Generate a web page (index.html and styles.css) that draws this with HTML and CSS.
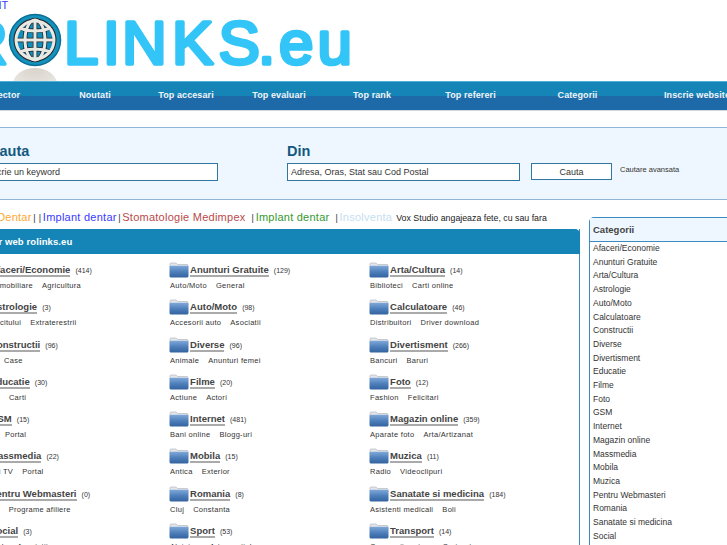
FILE: index.html
```html
<!DOCTYPE html>
<html lang="en">
<head>
    <meta charset="UTF-8">
    <title>ROLINKS.eu</title>
    <link rel="stylesheet" href="styles.css">
</head>
<body>
    <svg class="defs" width="0" height="0">
        <defs>
            <linearGradient id="folderBody" x1="0" y1="0" x2="0" y2="1">
                <stop offset="0" stop-color="#7fa8d8"/>
                <stop offset="0.5" stop-color="#4f80bb"/>
                <stop offset="1" stop-color="#33639f"/>
            </linearGradient>
            <symbol id="folder" viewBox="0 0 20 16">
                <path d="M1 3.5V2q0-1 1-1h5l1.500 1.500H18q1 0 1 1V6H1z" fill="#e4e6ea" stroke="#a9b0bb" stroke-width=".6"/>
                <path d="M.5 5q0-1.200 1.200-1.200H18.300q1.200 0 1.200 1.200V14q0 1.500-1.500 1.500H2q-1.500 0-1.500-1.500z" fill="url(#folderBody)"/>
            </symbol>
        </defs>
    </svg>

    <div class="page">
        <header class="top">
            <a class="top-link" href="#">CONT</a>
            <svg class="logo" width="800" height="71" viewBox="-72 10 800 71">
                <defs>
                    <radialGradient id="reflect" cx="0.5" cy="0" r="0.9">
                        <stop offset="0" stop-color="#d8d3ca"/>
                        <stop offset="1" stop-color="#efeeea"/>
                    </radialGradient>
                </defs>
                <g class="logo-text">
                    <text x="-37" y="63.5">R</text>
                    <text x="64 102.700 122 172 218.600" y="63.5">LINKS</text>
                    <text x="258 279 317.500" y="63.5">.eu</text>
                </g>
                <ellipse cx="35" cy="84" rx="22" ry="16" fill="url(#reflect)"/>
                <circle cx="35" cy="40" r="25.500" fill="#1492bd"/>
                <circle cx="35" cy="40" r="25.500" fill="none" stroke="#0a6f95" stroke-width="1.500"/>
                <circle cx="35" cy="40" r="20.500" fill="#0f8fbd" stroke="#222" stroke-width="2"/>
                <g class="globe-dark">
                    <path d="M35 20V60M15 40H55M19 28Q35 34 51 28M19 52Q35 46 51 52"/>
                    <ellipse cx="35" cy="40" rx="10" ry="20"/>
                </g>
                <g class="globe-light">
                    <path d="M35 20V60M15 40H55M19 28Q35 34 51 28M19 52Q35 46 51 52"/>
                    <ellipse cx="35" cy="40" rx="10" ry="20"/>
                    <circle cx="35" cy="40" r="19"/>
                </g>
            </svg>
        </header>

        <nav class="nav">
            <a href="#">Director</a>
            <a href="#">Noutati</a>
            <a href="#">Top accesari</a>
            <a href="#">Top evaluari</a>
            <a href="#">Top rank</a>
            <a href="#">Top refereri</a>
            <a href="#">Categorii</a>
            <a href="#">Inscrie website</a>
        </nav>

        <form class="search">
            <div class="search-field">
                <h2>Cauta</h2>
                <input class="what" type="text" value="Scrie un keyword">
            </div>
            <div class="search-field">
                <h2>Din</h2>
                <input class="where" type="text" value="Adresa, Oras, Stat sau Cod Postal">
            </div>
            <button type="button">Cauta</button>
            <a class="advanced" href="#">Cautare avansata</a>
        </form>

        <div class="content">
            <main class="main">
                <p class="ticker"><a class="orange" href="#">Implant Dentar</a><i>|</i><i>|</i><a class="blue" href="#">Implant dentar</a><i>|</i><a class="red" href="#">Stomatologie Medimpex</a><i class="wide">|</i><a class="green" href="#">Implant dentar</a><i class="wide">|</i><a class="pale" href="#">Insolventa</a><span class="vox">Vox Studio angajeaza fete, cu sau fara</span></p>
                <section class="panel">
                    <h1>Director web rolinks.eu</h1>
                    <div class="dir">
                        <div class="cat">
                            <svg class="folder"><use href="#folder"/></svg>
                            <a class="name" href="#">Afaceri/Economie</a> <small>(414)</small>
                            <p class="sub"><a href="#">Agentii Imobiliare</a><a href="#">Agricultura</a></p>
                        </div>
                        <div class="cat">
                            <svg class="folder"><use href="#folder"/></svg>
                            <a class="name" href="#">Anunturi Gratuite</a> <small>(129)</small>
                            <p class="sub"><a href="#">Auto/Moto</a><a href="#">General</a></p>
                        </div>
                        <div class="cat">
                            <svg class="folder"><use href="#folder"/></svg>
                            <a class="name" href="#">Arta/Cultura</a> <small>(14)</small>
                            <p class="sub"><a href="#">Biblioteci</a><a href="#">Carti online</a></p>
                        </div>

                        <div class="cat">
                            <svg class="folder"><use href="#folder"/></svg>
                            <a class="name" href="#">Astrologie</a> <small>(3)</small>
                            <p class="sub"><a href="#">Arta Ghicitului</a><a href="#">Extraterestrii</a></p>
                        </div>
                        <div class="cat">
                            <svg class="folder"><use href="#folder"/></svg>
                            <a class="name" href="#">Auto/Moto</a> <small>(98)</small>
                            <p class="sub"><a href="#">Accesorii auto</a><a href="#">Asociatii</a></p>
                        </div>
                        <div class="cat">
                            <svg class="folder"><use href="#folder"/></svg>
                            <a class="name" href="#">Calculatoare</a> <small>(46)</small>
                            <p class="sub"><a href="#">Distribuitori</a><a href="#">Driver download</a></p>
                        </div>

                        <div class="cat">
                            <svg class="folder"><use href="#folder"/></svg>
                            <a class="name" href="#">Constructii</a> <small>(96)</small>
                            <p class="sub"><a href="#">Blocuri</a><a href="#">Case</a></p>
                        </div>
                        <div class="cat">
                            <svg class="folder"><use href="#folder"/></svg>
                            <a class="name" href="#">Diverse</a> <small>(96)</small>
                            <p class="sub"><a href="#">Animale</a><a href="#">Anunturi femei</a></p>
                        </div>
                        <div class="cat">
                            <svg class="folder"><use href="#folder"/></svg>
                            <a class="name" href="#">Divertisment</a> <small>(266)</small>
                            <p class="sub"><a href="#">Bancuri</a><a href="#">Baruri</a></p>
                        </div>

                        <div class="cat">
                            <svg class="folder"><use href="#folder"/></svg>
                            <a class="name" href="#">Educatie</a> <small>(30)</small>
                            <p class="sub"><a href="#">Admiteri</a><a href="#">Carti</a></p>
                        </div>
                        <div class="cat">
                            <svg class="folder"><use href="#folder"/></svg>
                            <a class="name" href="#">Filme</a> <small>(20)</small>
                            <p class="sub"><a href="#">Actiune</a><a href="#">Actori</a></p>
                        </div>
                        <div class="cat">
                            <svg class="folder"><use href="#folder"/></svg>
                            <a class="name" href="#">Foto</a> <small>(12)</small>
                            <p class="sub"><a href="#">Fashion</a><a href="#">Felicitari</a></p>
                        </div>

                        <div class="cat">
                            <svg class="folder"><use href="#folder"/></svg>
                            <a class="name" href="#">GSM</a> <small>(15)</small>
                            <p class="sub"><a href="#">Melodii</a><a href="#">Portal</a></p>
                        </div>
                        <div class="cat">
                            <svg class="folder"><use href="#folder"/></svg>
                            <a class="name" href="#">Internet</a> <small>(481)</small>
                            <p class="sub"><a href="#">Bani online</a><a href="#">Blogg-uri</a></p>
                        </div>
                        <div class="cat">
                            <svg class="folder"><use href="#folder"/></svg>
                            <a class="name" href="#">Magazin online</a> <small>(359)</small>
                            <p class="sub"><a href="#">Aparate foto</a><a href="#">Arta/Artizanat</a></p>
                        </div>

                        <div class="cat">
                            <svg class="folder"><use href="#folder"/></svg>
                            <a class="name" href="#">Massmedia</a> <small>(22)</small>
                            <p class="sub"><a href="#">Emisiuni TV</a><a href="#">Portal</a></p>
                        </div>
                        <div class="cat">
                            <svg class="folder"><use href="#folder"/></svg>
                            <a class="name" href="#">Mobila</a> <small>(15)</small>
                            <p class="sub"><a href="#">Antica</a><a href="#">Exterior</a></p>
                        </div>
                        <div class="cat">
                            <svg class="folder"><use href="#folder"/></svg>
                            <a class="name" href="#">Muzica</a> <small>(11)</small>
                            <p class="sub"><a href="#">Radio</a><a href="#">Videoclipuri</a></p>
                        </div>

                        <div class="cat">
                            <svg class="folder"><use href="#folder"/></svg>
                            <a class="name" href="#">Pentru Webmasteri</a> <small>(0)</small>
                            <p class="sub"><a href="#">Domenii</a><a href="#">Programe afiliere</a></p>
                        </div>
                        <div class="cat">
                            <svg class="folder"><use href="#folder"/></svg>
                            <a class="name" href="#">Romania</a> <small>(8)</small>
                            <p class="sub"><a href="#">Cluj</a><a href="#">Constanta</a></p>
                        </div>
                        <div class="cat">
                            <svg class="folder"><use href="#folder"/></svg>
                            <a class="name" href="#">Sanatate si medicina</a> <small>(184)</small>
                            <p class="sub"><a href="#">Asistenti medicali</a><a href="#">Boli</a></p>
                        </div>

                        <div class="cat">
                            <svg class="folder"><use href="#folder"/></svg>
                            <a class="name" href="#">Social</a> <small>(3)</small>
                            <p class="sub"><a href="#">Ambasade</a><a href="#">Asociatii</a></p>
                        </div>
                        <div class="cat">
                            <svg class="folder"><use href="#folder"/></svg>
                            <a class="name" href="#">Sport</a> <small>(53)</small>
                            <p class="sub"><a href="#">Alpinism</a><a href="#">Arte martiale</a></p>
                        </div>
                        <div class="cat">
                            <svg class="folder"><use href="#folder"/></svg>
                            <a class="name" href="#">Transport</a> <small>(14)</small>
                            <p class="sub"><a href="#">Companii aeriene</a><a href="#">Curierat</a></p>
                        </div>
                    </div>
                </section>
            </main>

            <aside class="side">
                <h3>Categorii</h3>
                <ul>
                    <li>Afaceri/Economie</li>
                    <li>Anunturi Gratuite</li>
                    <li>Arta/Cultura</li>
                    <li>Astrologie</li>
                    <li>Auto/Moto</li>
                    <li>Calculatoare</li>
                    <li>Constructii</li>
                    <li>Diverse</li>
                    <li>Divertisment</li>
                    <li>Educatie</li>
                    <li>Filme</li>
                    <li>Foto</li>
                    <li>GSM</li>
                    <li>Internet</li>
                    <li>Magazin online</li>
                    <li>Massmedia</li>
                    <li>Mobila</li>
                    <li>Muzica</li>
                    <li>Pentru Webmasteri</li>
                    <li>Romania</li>
                    <li>Sanatate si medicina</li>
                    <li>Social</li>
                </ul>
            </aside>
        </div>
    </div>
</body>
</html>
```

FILE: styles.css
```css
html, body {
    margin: 0;
    height: 545px;
    overflow: hidden;
}

body {
    font-family: "Liberation Sans", Arial, sans-serif;
    background: #fff;
    color: #333;
}

a {
    color: inherit;
    text-decoration: none;
}

.defs {
    display: block;
}

/* the site is wider than the window, its left side is cut off */
.page {
    width: 900px;
    margin-left: -72px;
}

.top {
    height: 81px;
}

.top-link {
    display: block;
    height: 10px;
    padding-left: 49px;
    font-size: 11px;
    line-height: 10px;
    color: #3a3aff;
}

.logo {
    display: block;
}

.logo-text {
    font-family: "Liberation Sans", Arial, sans-serif;
    font-size: 62px;
    fill: #33c5f7;
    stroke: #33c5f7;
    stroke-width: 3.600;
    stroke-linejoin: round;
}

.globe-dark, .globe-light {
    fill: none;
}

.globe-dark {
    stroke: #222;
    stroke-width: 4.500;
}

.globe-light {
    stroke: #e8e8e4;
    stroke-width: 3;
}

.nav {
    display: grid;
    grid-template-columns: 90px 95px 87px 99px 87px 110px 104px 135px;
    padding-left: 29.5px;
    height: 30px;
    box-sizing: border-box;
    border-top: 1px solid #4fb0d8;
    border-bottom: 1px solid #cfd8e4;
    background: linear-gradient(#1585b8 0, #1585b8 14px, #1e6aa8 14px, #1e6aa8 100%);
}

.nav a {
    text-align: center;
    font-size: 9px;
    font-weight: bold;
    line-height: 26px;
    letter-spacing: 0.1px;
    color: #f0f4f8;
}

.search {
    display: flex;
    align-items: flex-start;
    height: 73px;
    margin-top: 16px;
    padding-left: 61px;
    box-sizing: border-box;
    border-top: 1px solid #8fb6d6;
    border-bottom: 1px solid #8fb6d6;
    background: #eef7ff;
}

.search-field {
    display: flex;
    flex-direction: column;
}

.search-field + .search-field {
    margin-left: 69px;
}

.search h2 {
    margin: 12px 0 0;
    font-size: 14.500px;
    line-height: 23px;
    color: #14597f;
}

.search input {
    height: 18px;
    margin: 0;
    padding: 0 3px;
    box-sizing: border-box;
    border: 1px solid #2f76a3;
    background: #fff;
    font-family: "Liberation Sans", Arial, sans-serif;
    font-size: 9px;
    color: #333;
}

.search input.what {
    width: 229px;
    padding-left: 1px;
}

.where {
    width: 233px;
}

.search button {
    width: 81px;
    height: 17px;
    margin: 35px 0 0 11px;
    padding: 0;
    border: 1px solid #2f76a3;
    background: #fff;
    font-family: "Liberation Sans", Arial, sans-serif;
    font-size: 9px;
    color: #333;
}

.advanced {
    margin: 37px 0 0 8px;
    font-size: 7.500px;
    line-height: 10px;
}

.content {
    display: flex;
    align-items: flex-start;
}

.main {
    flex: none;
    width: 652px;
}

.ticker {
    height: 29px;
    margin: 0;
    padding-top: 10px;
    padding-left: 28px;
    box-sizing: border-box;
    font-size: 11px;
    line-height: 15px;
    letter-spacing: 0.25px;
    white-space: nowrap;
    overflow: hidden;
}

.ticker i {
    margin: 0 1.5px;
    font-style: normal;
    color: #333;
    font-size: 9px;
}

.ticker i.wide {
    margin-left: 6px;
}

.orange { color: #ffa733; }
.blue { color: #3a3aff; }
.red { color: #b84a4a; }
.green { color: #33992f; }
.pale { color: #c4e0f0; }

.vox {
    margin-left: 4px;
    font-size: 8.800px;
    letter-spacing: 0;
    color: #222;
}

.panel {
    height: 400px;
    box-sizing: border-box;
    border-right: 1px solid #3b8ac0;
    border-left: 1px solid #3b8ac0;
}

.panel h1 {
    height: 25px;
    margin: 0 -1px;
    padding-left: 37px;
    border-radius: 5px 5px 0 0;
    background: #1585b8;
    font-size: 9.500px;
    line-height: 26px;
    letter-spacing: 0.1px;
    color: #fff;
}

.dir {
    display: grid;
    grid-template-columns: repeat(3, 200px);
    grid-auto-rows: 37.3px;
    padding: 8px 0 0 40px;
}

.cat {
    white-space: nowrap;
    font-size: 7.500px;
    line-height: 13px;
}

.folder {
    width: 20px;
    height: 16px;
    vertical-align: -5px;
}

.name {
    margin-left: -1px;
    border-bottom: 2px solid #aaa;
    font-size: 9.500px;
    font-weight: bold;
    color: #444;
}

.cat small {
    margin-left: 3px;
    font-size: 7px;
}

.sub {
    margin: 3px 0 0 1px;
    font-size: 7.500px;
    line-height: 10px;
    letter-spacing: 0.3px;
}

.sub a {
    margin-right: 9px;
}

.side {
    flex: none;
    width: 200px;
    margin: 17px 0 0 9px;
    height: 350px;
    box-sizing: border-box;
    border-left: 1px solid #3b8ac0;
    border-top: 1px solid #3b8ac0;
    border-top-left-radius: 5px;
}

.side h3 {
    height: 23px;
    margin: 0;
    padding-left: 3px;
    border-bottom: 1px solid #3b8ac0;
    background: #eef7ff;
    font-size: 9.500px;
    line-height: 23px;
    color: #444;
}

.side ul {
    margin: 0;
    padding: 0 0 0 3px;
    list-style: none;
    font-size: 8.500px;
    line-height: 13.700px;
}
```
